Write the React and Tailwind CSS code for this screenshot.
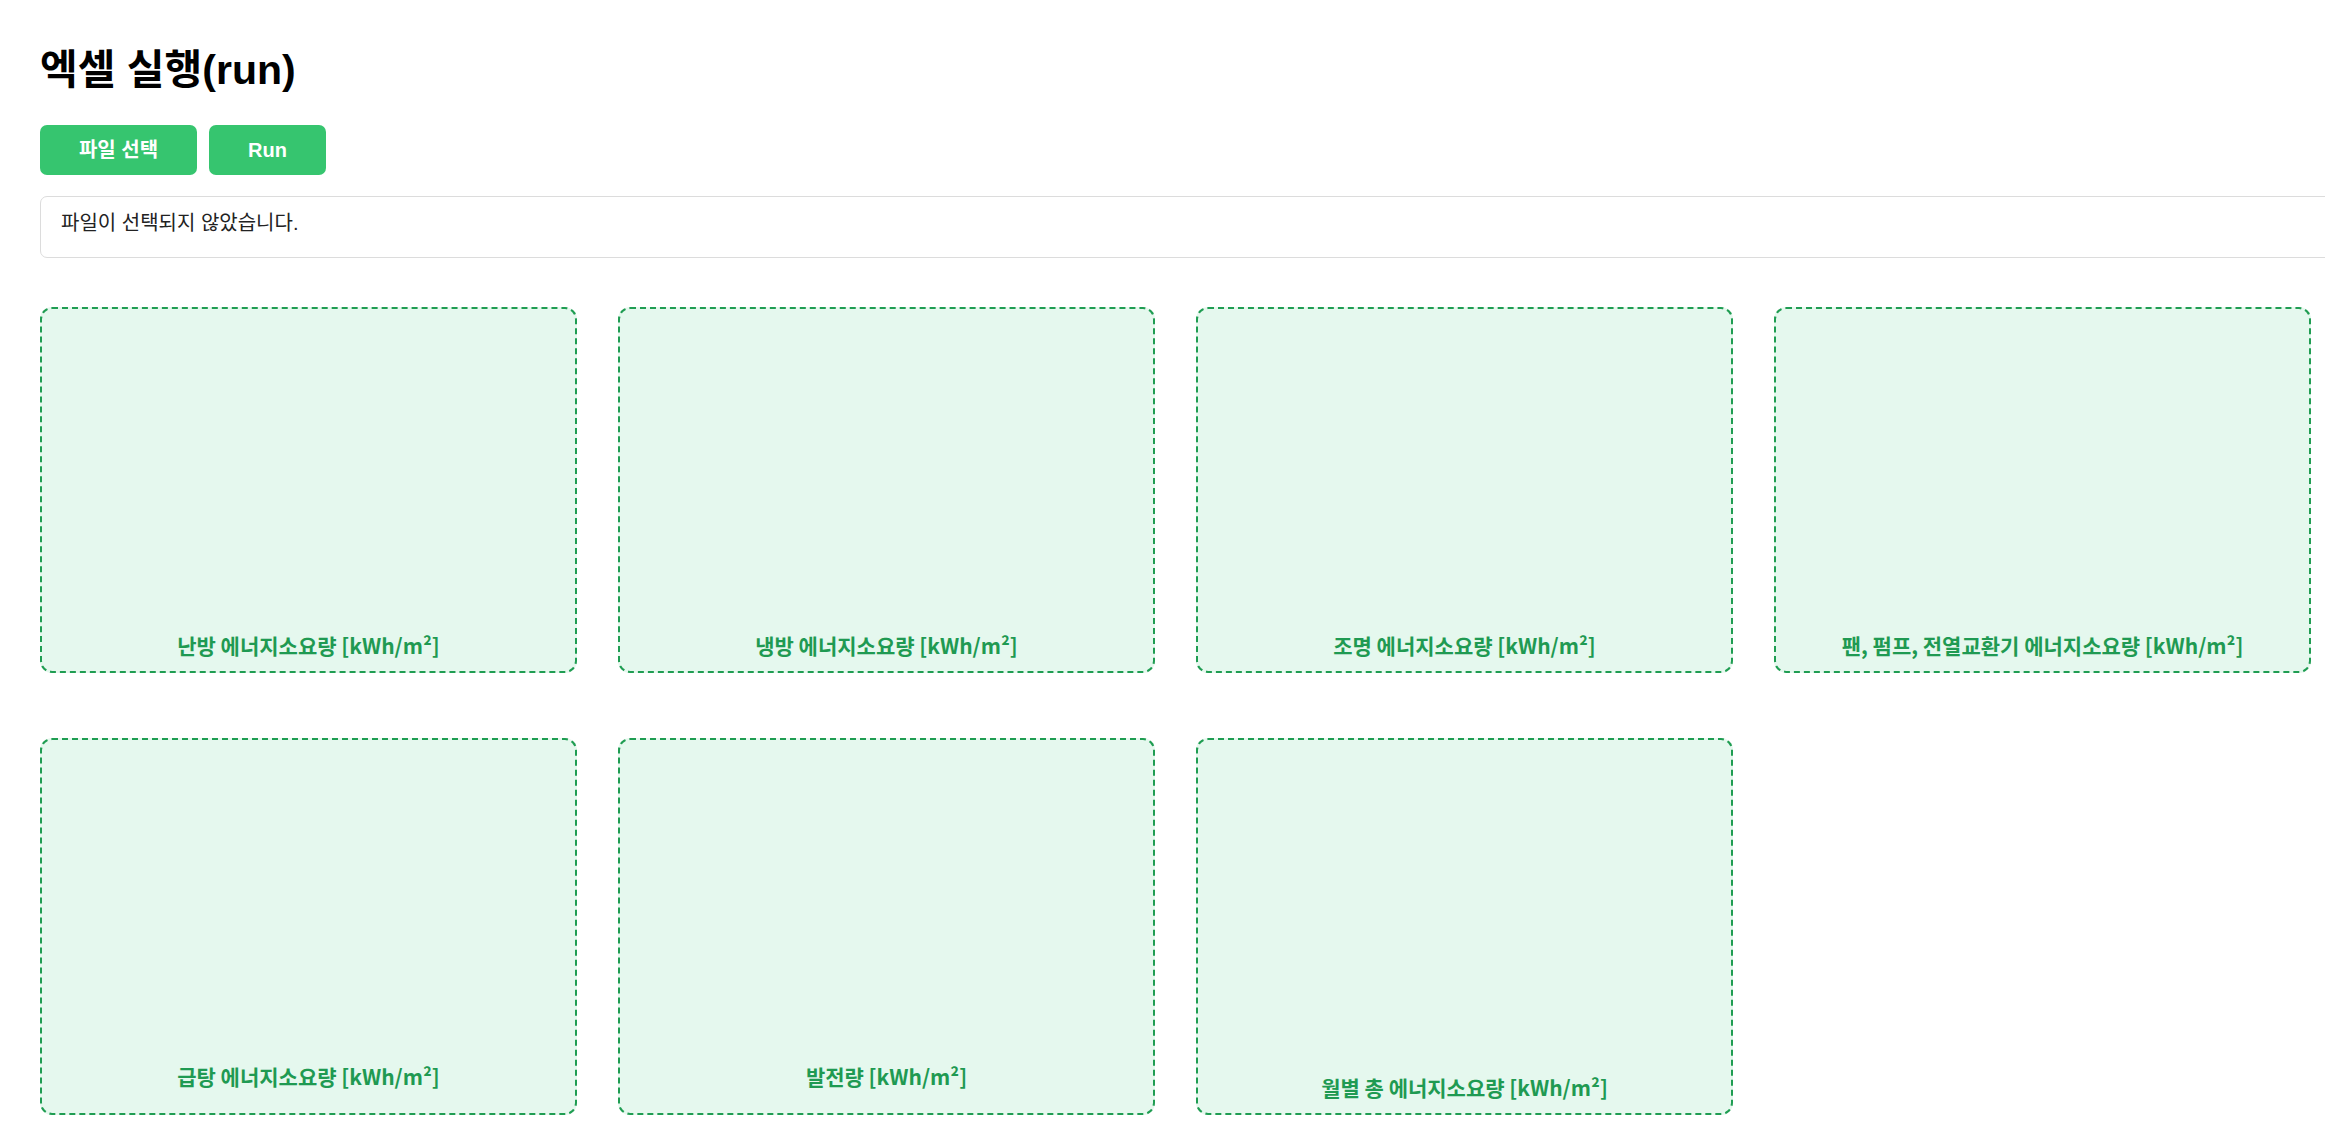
import React from "react";

const cards = [
  { label: "난방 에너지소요량 [kWh/m²]" },
  { label: "냉방 에너지소요량 [kWh/m²]" },
  { label: "조명 에너지소요량 [kWh/m²]" },
  { label: "팬, 펌프, 전열교환기 에너지소요량 [kWh/m²]" },
  { label: "급탕 에너지소요량 [kWh/m²]" },
  { label: "발전량 [kWh/m²]" },
  { label: "월별 총 에너지소요량 [kWh/m²]", tall: true },
];

function Card({ label, tall }) {
  return (
    <div className="flex flex-col rounded-[12px] border-2 border-dashed border-[#1f9d52] bg-[#e5f8ee] pb-[12px]">
      <div className={tall ? "h-[333px]" : "h-[322px]"} />
      <div className="text-center text-[21px] font-bold leading-[28px] text-[#1f9a52] [font-family:'Noto_Sans_CJK_KR','Noto_Sans',sans-serif]">
        {label}
      </div>
    </div>
  );
}

export default function App() {
  return (
    <div className="h-screen w-screen overflow-hidden bg-white [font-family:'Liberation_Sans','Noto_Sans_CJK_KR',sans-serif]">
      <div className="pl-[40px] pt-[45px]">
        <h1 className="text-[41px] font-bold leading-[50px] text-black">엑셀 실행(run)</h1>
        <div className="mt-[30px] flex gap-[12px]">
          <button className="h-[50px] w-[157px] rounded-[7px] bg-[#36c56f] text-[20px] font-bold text-white">
            파일 선택
          </button>
          <button className="h-[50px] w-[117px] rounded-[7px] bg-[#36c56f] text-[20px] font-bold text-white">
            Run
          </button>
        </div>
        <div className="mt-[21px] h-[62px] w-[2340px] rounded-[7px] border border-[#dcdcdc] pl-[20px] pt-[13px] text-[20px] leading-[26px] text-[#222]">
          파일이 선택되지 않았습니다.
        </div>
        <div className="mt-[49px] grid w-[2271px] grid-cols-4 gap-x-[41px] gap-y-[65px]">
          {cards.map((c) => (
            <Card key={c.label} label={c.label} tall={c.tall} />
          ))}
        </div>
      </div>
    </div>
  );
}
